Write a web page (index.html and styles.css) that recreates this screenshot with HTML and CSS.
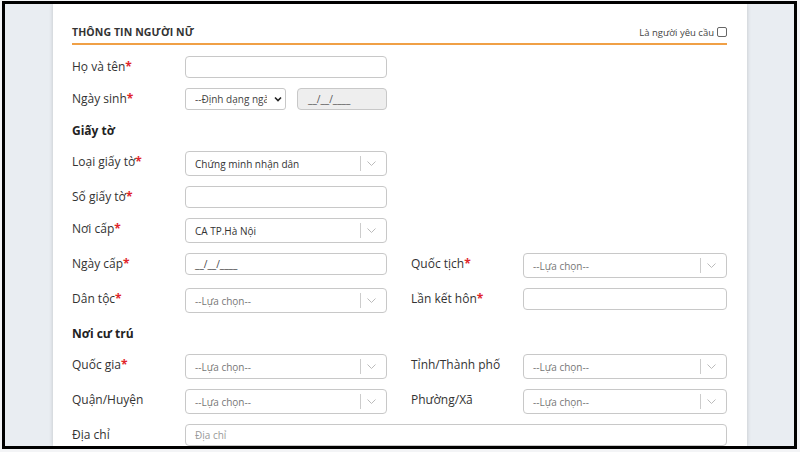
FILE: index.html
```html
<!DOCTYPE html>
<html lang="vi">
<head>
<meta charset="utf-8">
<link rel="stylesheet" href="styles.css">
</head>
<body>
<div class="frame">
  <div class="card">
    <div class="head">
      <span class="title">THÔNG TIN NGƯỜI NỮ</span>
      <span class="req">Là người yêu cầu <span class="cb"></span></span>
    </div>
    <div class="form">
      <div class="row">
        <span class="lbl">Họ và tên<b>*</b></span>
        <div class="inp"></div>
      </div>
      <div class="row">
        <span class="lbl">Ngày sinh<b>*</b></span>
        <div class="pair">
          <div class="nsel"><span class="ntext">--Định dạng ngày</span><svg class="narr" width="8" height="6" viewBox="0 0 8 6"><path d="M1 1.5 L4 4.5 L7 1.5" fill="none" stroke="#222" stroke-width="1.6"/></svg></div>
          <div class="inp date">__/__/____</div>
        </div>
      </div>
      <div class="sec">Giấy tờ</div>
      <div class="row">
        <span class="lbl">Loại giấy tờ<b>*</b></span>
        <div class="sel"><span class="val">Chứng minh nhận dân</span><span class="ind"><svg width="9" height="5" viewBox="0 0 9 5"><path d="M0.5 0.5 L4.5 4.5 L8.5 0.5" fill="none" stroke="#bbb" stroke-width="1"/></svg></span></div>
      </div>
      <div class="row">
        <span class="lbl">Số giấy tờ<b>*</b></span>
        <div class="inp"></div>
      </div>
      <div class="row">
        <span class="lbl">Nơi cấp<b>*</b></span>
        <div class="sel"><span class="val">CA TP.Hà Nội</span><span class="ind"><svg width="9" height="5" viewBox="0 0 9 5"><path d="M0.5 0.5 L4.5 4.5 L8.5 0.5" fill="none" stroke="#bbb" stroke-width="1"/></svg></span></div>
      </div>
      <div class="row">
        <span class="lbl">Ngày cấp<b>*</b></span>
        <div class="inp txt">__/__/____</div>
        <span class="lbl r">Quốc tịch<b>*</b></span>
        <div class="sel r2"><span class="ph">--Lựa chọn--</span><span class="ind"><svg width="9" height="5" viewBox="0 0 9 5"><path d="M0.5 0.5 L4.5 4.5 L8.5 0.5" fill="none" stroke="#bbb" stroke-width="1"/></svg></span></div>
      </div>
      <div class="row">
        <span class="lbl">Dân tộc<b>*</b></span>
        <div class="sel"><span class="ph">--Lựa chọn--</span><span class="ind"><svg width="9" height="5" viewBox="0 0 9 5"><path d="M0.5 0.5 L4.5 4.5 L8.5 0.5" fill="none" stroke="#bbb" stroke-width="1"/></svg></span></div>
        <span class="lbl r">Lần kết hôn<b>*</b></span>
        <div class="inp r2"></div>
      </div>
      <div class="sec">Nơi cư trú</div>
      <div class="row">
        <span class="lbl">Quốc gia<b>*</b></span>
        <div class="sel"><span class="ph">--Lựa chọn--</span><span class="ind"><svg width="9" height="5" viewBox="0 0 9 5"><path d="M0.5 0.5 L4.5 4.5 L8.5 0.5" fill="none" stroke="#bbb" stroke-width="1"/></svg></span></div>
        <span class="lbl r">Tỉnh/Thành phố</span>
        <div class="sel r2"><span class="ph">--Lựa chọn--</span><span class="ind"><svg width="9" height="5" viewBox="0 0 9 5"><path d="M0.5 0.5 L4.5 4.5 L8.5 0.5" fill="none" stroke="#bbb" stroke-width="1"/></svg></span></div>
      </div>
      <div class="row">
        <span class="lbl">Quận/Huyện</span>
        <div class="sel"><span class="ph">--Lựa chọn--</span><span class="ind"><svg width="9" height="5" viewBox="0 0 9 5"><path d="M0.5 0.5 L4.5 4.5 L8.5 0.5" fill="none" stroke="#bbb" stroke-width="1"/></svg></span></div>
        <span class="lbl r">Phường/Xã</span>
        <div class="sel r2"><span class="ph">--Lựa chọn--</span><span class="ind"><svg width="9" height="5" viewBox="0 0 9 5"><path d="M0.5 0.5 L4.5 4.5 L8.5 0.5" fill="none" stroke="#bbb" stroke-width="1"/></svg></span></div>
      </div>
      <div class="row">
        <span class="lbl">Địa chỉ</span>
        <div class="inp txt wide ph">Địa chỉ</div>
      </div>
    </div>
  </div>
</div>
</body>
</html>
```

FILE: styles.css
```css
* { box-sizing: border-box; }
html, body { margin: 0; padding: 0; }
body {
  background: #f3f4f6;
  font-family: "Open Sans", "Noto Sans", sans-serif;
  color: #333;
  width: 800px;
  height: 452px;
  overflow: hidden;
}
.frame {
  margin: 1px 0 0 2px;
  width: 795px;
  height: 448px;
  border: 3px solid #000;
  background: #e9edf2;
  overflow: hidden;
  padding-left: 48px;
}
.card {
  width: 694px;
  height: 100%;
  background: #fff;
  box-shadow: 0 0 4px rgba(0,0,0,0.18);
  padding: 18px 20px 0 19px;
}
.head {
  height: 23px;
  border-bottom: 2px solid #f0a046;
  display: flex;
  align-items: center;
  justify-content: space-between;
  padding-bottom: 1px;
}
.title {
  font-weight: 700;
  font-size: 10.5px;
  color: #333;
  letter-spacing: 0.1px;
}
.req {
  font-size: 9.5px;
  color: #444;
  display: flex;
  align-items: center;
  gap: 3px;
}
.cb {
  width: 10px;
  height: 10px;
  border: 1px solid #666;
  border-radius: 2px;
  display: inline-block;
}
.form {
  margin-top: 11px;
  display: flex;
  flex-direction: column;
  gap: 10px;
}
.row {
  display: grid;
  grid-template-columns: 113px 202px 24px 112px 204px;
  align-items: start;
}
.lbl {
  font-size: 12px;
  line-height: 22px;
  color: #333;
  white-space: nowrap;
}
.lbl b { color: #e0262b; font-weight: 700; }
.lbl.r { grid-column: 4; }
.r2 { grid-column: 5; }
.sec {
  height: 21px;
  line-height: 21px;
  font-size: 12px;
  font-weight: 700;
  color: #222;
}
.inp {
  height: 22px;
  border: 1px solid #c8c8c8;
  border-radius: 4px;
  background: #fff;
}
.inp.txt {
  font-size: 10px;
  line-height: 20px;
  padding-left: 9px;
  color: #444;
}
.inp.ph { color: #999; }
.inp.wide { grid-column: 2 / 6; }
.pair {
  display: flex;
  gap: 11px;
}
.nsel {
  width: 101px;
  height: 22px;
  border: 1px solid #c8c8c8;
  border-radius: 3px;
  display: flex;
  align-items: center;
  padding-left: 9px;
}
.ntext {
  width: 72px;
  overflow: hidden;
  white-space: nowrap;
  font-size: 10px;
  color: #444;
}
.narr { margin-left: 7px; }
.date {
  width: 90px;
  background: #eee;
  font-size: 10px;
  line-height: 20px;
  padding-left: 10px;
  color: #555;
}
.sel {
  height: 25px;
  border: 1px solid #c8c8c8;
  border-radius: 4px;
  display: flex;
  align-items: center;
  padding-left: 9px;
  font-size: 10px;
  background: #fff;
}
.val { color: #333; }
.ph { color: #777; }
.ind {
  margin-left: auto;
  width: 26px;
  height: 15px;
  border-left: 1px solid #ccc;
  display: flex;
  align-items: center;
  padding-left: 6px;
}
.ind svg { display: block; }
```
